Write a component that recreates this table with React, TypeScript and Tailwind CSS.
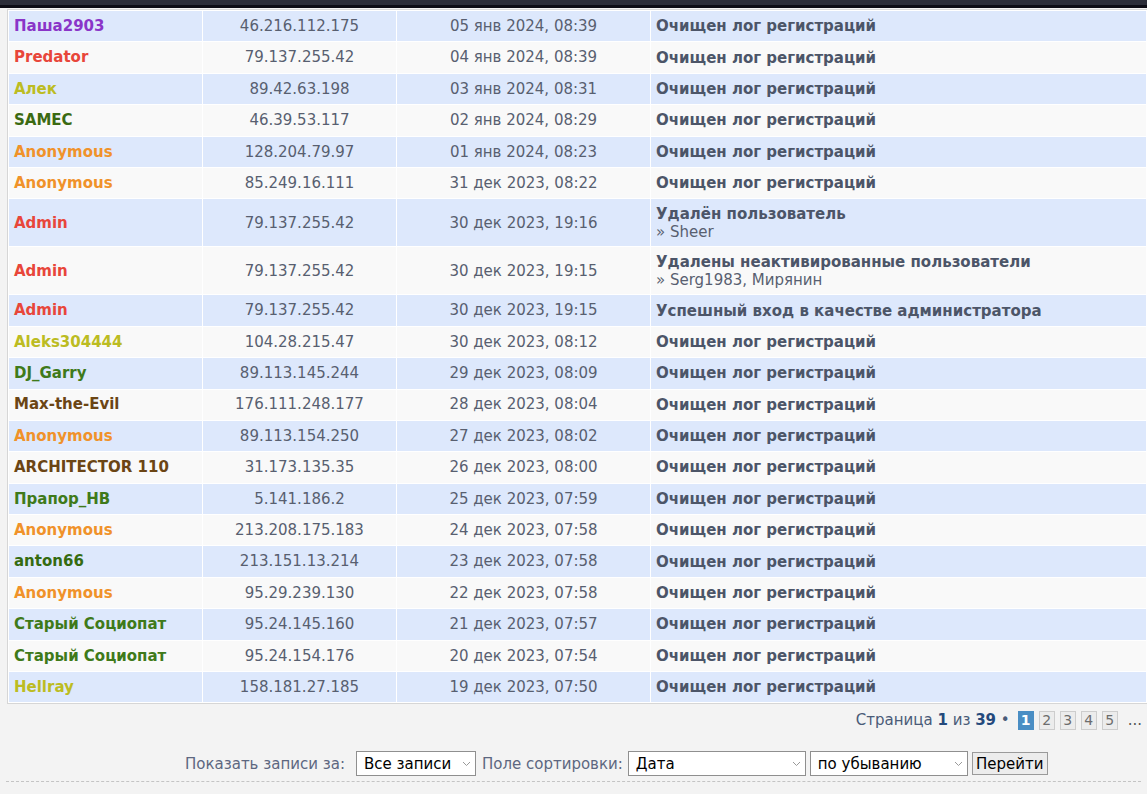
import React from "react"

type LogRow = {
  user: string
  color: string
  ip: string
  date: string
  action: string
  extra?: string
}

const rows: LogRow[] = [
  { user: "Паша2903", color: "text-[#8a35c8]", ip: "46.216.112.175", date: "05 янв 2024, 08:39", action: "Очищен лог регистраций" },
  { user: "Predator", color: "text-[#e8463a]", ip: "79.137.255.42", date: "04 янв 2024, 08:39", action: "Очищен лог регистраций" },
  { user: "Алек", color: "text-[#bcbc22]", ip: "89.42.63.198", date: "03 янв 2024, 08:31", action: "Очищен лог регистраций" },
  { user: "SAMEC", color: "text-[#3b6a12]", ip: "46.39.53.117", date: "02 янв 2024, 08:29", action: "Очищен лог регистраций" },
  { user: "Anonymous", color: "text-[#f0922a]", ip: "128.204.79.97", date: "01 янв 2024, 08:23", action: "Очищен лог регистраций" },
  { user: "Anonymous", color: "text-[#f0922a]", ip: "85.249.16.111", date: "31 дек 2023, 08:22", action: "Очищен лог регистраций" },
  { user: "Admin", color: "text-[#e8463a]", ip: "79.137.255.42", date: "30 дек 2023, 19:16", action: "Удалён пользователь", extra: "» Sheer" },
  { user: "Admin", color: "text-[#e8463a]", ip: "79.137.255.42", date: "30 дек 2023, 19:15", action: "Удалены неактивированные пользователи", extra: "» Serg1983, Мирянин" },
  { user: "Admin", color: "text-[#e8463a]", ip: "79.137.255.42", date: "30 дек 2023, 19:15", action: "Успешный вход в качестве администратора" },
  { user: "Aleks304444", color: "text-[#bcbc22]", ip: "104.28.215.47", date: "30 дек 2023, 08:12", action: "Очищен лог регистраций" },
  { user: "DJ_Garry", color: "text-[#3f7a1a]", ip: "89.113.145.244", date: "29 дек 2023, 08:09", action: "Очищен лог регистраций" },
  { user: "Max-the-Evil", color: "text-[#6b4514]", ip: "176.111.248.177", date: "28 дек 2023, 08:04", action: "Очищен лог регистраций" },
  { user: "Anonymous", color: "text-[#f0922a]", ip: "89.113.154.250", date: "27 дек 2023, 08:02", action: "Очищен лог регистраций" },
  { user: "ARCHITECTOR 110", color: "text-[#6b4514]", ip: "31.173.135.35", date: "26 дек 2023, 08:00", action: "Очищен лог регистраций" },
  { user: "Прапор_НВ", color: "text-[#3f7a1a]", ip: "5.141.186.2", date: "25 дек 2023, 07:59", action: "Очищен лог регистраций" },
  { user: "Anonymous", color: "text-[#f0922a]", ip: "213.208.175.183", date: "24 дек 2023, 07:58", action: "Очищен лог регистраций" },
  { user: "anton66", color: "text-[#356b10]", ip: "213.151.13.214", date: "23 дек 2023, 07:58", action: "Очищен лог регистраций" },
  { user: "Anonymous", color: "text-[#f0922a]", ip: "95.29.239.130", date: "22 дек 2023, 07:58", action: "Очищен лог регистраций" },
  { user: "Старый Социопат", color: "text-[#3f7a1a]", ip: "95.24.145.160", date: "21 дек 2023, 07:57", action: "Очищен лог регистраций" },
  { user: "Старый Социопат", color: "text-[#3f7a1a]", ip: "95.24.154.176", date: "20 дек 2023, 07:54", action: "Очищен лог регистраций" },
  { user: "Hellray", color: "text-[#bcbc22]", ip: "158.181.27.185", date: "19 дек 2023, 07:50", action: "Очищен лог регистраций" },
]

function Select({ value, width }: { value: string; width: string }) {
  return (
    <div
      className={`${width} h-[25px] flex items-center justify-between border border-[#8f8f8f] bg-white pl-[7px] pr-[4px] text-[15px] text-black`}
    >
      <span>{value}</span>
      <svg width="9" height="6" viewBox="0 0 9 6" className="text-[#9a9a9a]">
        <path d="M1 1l3.5 3.5L8 1" fill="none" stroke="currentColor" strokeWidth="1" />
      </svg>
    </div>
  )
}

export default function App() {
  return (
    <div
      className="w-full h-[794px] overflow-hidden bg-[#f3f3f3] text-[15px]"
      style={{ fontFamily: '"DejaVu Sans", Verdana, sans-serif' }}
    >
      {/* top dark strip */}
      <div className="h-[5px] bg-[#2b2d39]" />
      <div className="h-[3px] bg-[#0c0c15]" />

      {/* log table */}
      <div className="pl-[7px] pt-[1px]">
        <div className="border border-[#d6d6d6] border-r-0 bg-white p-px flex flex-col gap-px">
          {rows.map((r, i) => {
            const bg = i % 2 === 0 ? "bg-[#dde8fc]" : "bg-[#f9f9f9]"
            return (
              <div
                key={i}
                className={`grid grid-cols-[193px_193px_253px_1fr] gap-x-px ${r.extra ? "h-[47px]" : "h-[30.4px]"}`}
              >
                <div className={`flex items-center pl-[5px] font-bold ${r.color} ${bg}`}>{r.user}</div>
                <div className={`flex items-center justify-center text-[#585f70] ${bg}`}>{r.ip}</div>
                <div className={`flex items-center justify-center text-[#585f70] ${bg}`}>{r.date}</div>
                <div className={`flex flex-col justify-center pl-[5px] leading-[18px] ${bg}`}>
                  <span className="font-bold text-[#4c5568]">{r.action}</span>
                  {r.extra && <span className="text-[#585f70]">{r.extra}</span>}
                </div>
              </div>
            )
          })}
        </div>
      </div>

      {/* pagination */}
      <div className="flex items-center justify-end pr-[5px] pt-[3px] h-[29px] text-[#4a5b78]">
        <span>
          Страница <b className="text-[#24497c]">1</b> из <b className="text-[#24497c]">39</b> •
        </span>
        <div className="flex items-center gap-[5px] ml-[8px] text-[14px]">
          <span className="w-[16px] h-[19px] flex items-center justify-center bg-[#4a8ec4] text-white font-bold">1</span>
          {["2", "3", "4", "5"].map((p) => (
            <span
              key={p}
              className="w-[16px] h-[19px] flex items-center justify-center bg-[#ececec] border border-[#cdcdcd] text-[#6d6d6d]"
            >
              {p}
            </span>
          ))}
        </div>
        <span className="text-[#555] ml-[10px]">...</span>
      </div>

      {/* filter form */}
      <div className="flex items-center pt-[18px] pl-[185px] text-[#5d6780]">
        <span className="mr-[11px]">Показать записи за:</span>
        <Select value="Все записи" width="w-[120px]" />
        <span className="ml-[6px] mr-[5px]">Поле сортировки:</span>
        <Select value="Дата" width="w-[178px]" />
        <div className="w-[4px]" />
        <Select value="по убыванию" width="w-[158px]" />
        <button className="ml-[4px] h-[23px] w-[76px] border border-[#9a9a9a] bg-[#ececec] text-[15px] text-black">
          Перейти
        </button>
      </div>

      <div className="mx-[6px] mt-[5px] border-t border-dashed border-[#c4c4c4]" />
    </div>
  )
}
